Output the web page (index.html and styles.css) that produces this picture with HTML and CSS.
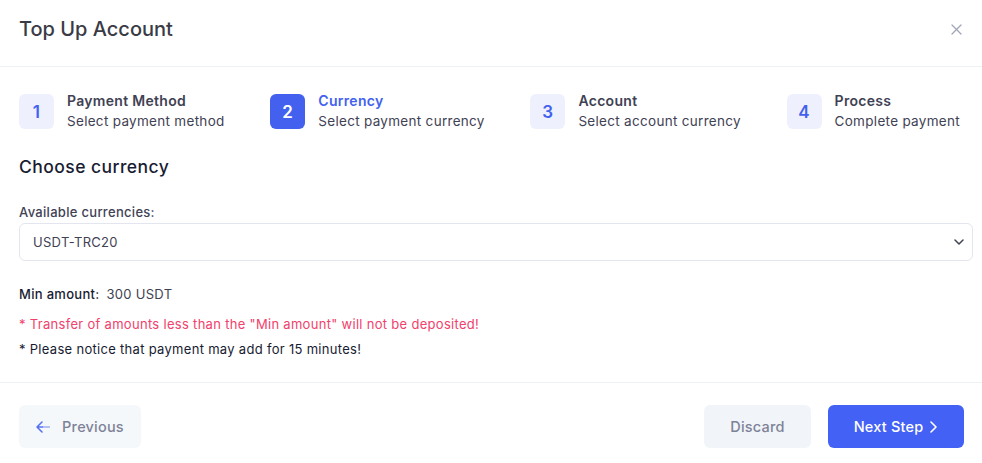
FILE: index.html
```html
<!DOCTYPE html>
<html>
<head>
<meta charset="utf-8">
<link rel="stylesheet" href="styles.css">
</head>
<body>
<div class="modal">
  <div class="modal-header">
    <h2 class="modal-title">Top Up Account</h2>
    <button class="close-btn" aria-label="Close">
      <svg width="11" height="11" viewBox="0 0 11 11"><path d="M1 1L10 10M10 1L1 10" stroke="#a1a5b7" stroke-width="1.3" stroke-linecap="round"/></svg>
    </button>
  </div>
  <div class="modal-body">
    <div class="stepper">
      <div class="step">
        <div class="step-icon">1</div>
        <div class="step-label">
          <div class="step-title">Payment Method</div>
          <div class="step-desc">Select payment method</div>
        </div>
      </div>
      <div class="step current">
        <div class="step-icon">2</div>
        <div class="step-label">
          <div class="step-title">Currency</div>
          <div class="step-desc">Select payment currency</div>
        </div>
      </div>
      <div class="step">
        <div class="step-icon">3</div>
        <div class="step-label">
          <div class="step-title">Account</div>
          <div class="step-desc">Select account currency</div>
        </div>
      </div>
      <div class="step">
        <div class="step-icon">4</div>
        <div class="step-label">
          <div class="step-title">Process</div>
          <div class="step-desc">Complete payment</div>
        </div>
      </div>
    </div>

    <h3 class="section-title">Choose currency</h3>

    <label class="field-label">Available currencies:</label>
    <div class="select">
      <span>USDT-TRC20</span>
      <svg class="chev" width="10" height="6" viewBox="0 0 10 6"><path d="M1 1L5 5L9 1" fill="none" stroke="#3f4254" stroke-width="1.5" stroke-linecap="round" stroke-linejoin="round"/></svg>
    </div>

    <div class="min-amount"><span class="min-label">Min amount:</span> 300 USDT</div>
    <div class="note danger">* Transfer of amounts less than the "Min amount" will not be deposited!</div>
    <div class="note">* Please notice that payment may add for 15 minutes!</div>
  </div>
  <div class="modal-footer">
    <button class="btn btn-light btn-prev">
      <svg width="14" height="12" viewBox="0 0 14 12"><path d="M6 1L1 6L6 11M1 6H13" fill="none" stroke="#4361ee" stroke-width="1.5" stroke-linecap="round" stroke-linejoin="round" opacity="0.9"/><path d="M7 6H13" stroke="#c7d0f8" stroke-width="1.5"/></svg>
      <span>Previous</span>
    </button>
    <div class="footer-right">
      <button class="btn btn-light btn-discard">Discard</button>
      <button class="btn btn-primary">Next Step
        <svg width="9" height="12" viewBox="0 0 9 12"><path d="M2 1L7 6L2 11" fill="none" stroke="#fff" stroke-width="1.6" stroke-linecap="round" stroke-linejoin="round"/></svg>
      </button>
    </div>
  </div>
</div>
</body>
</html>
```

FILE: styles.css
```css
* { box-sizing: border-box; }
html, body { margin: 0; padding: 0; background: #fff; }
body {
  font-family: Inter, "Noto Sans", sans-serif;
  color: #181c32;
  width: 982px;
  height: 463px;
  overflow: hidden;
  letter-spacing: 0.3px;
}
.modal { width: 982px; }
.modal-header {
  height: 67px;
  display: flex;
  align-items: center;
  justify-content: space-between;
  padding: 0 20px 0 19px;
  border-bottom: 1px solid #eff2f5;
}
.modal-title {
  margin: 0;
  font-family: Inter, Roboto, sans-serif;
  font-size: 20px;
  font-weight: 500;
  color: #3a3b45;
  letter-spacing: 0;
  padding-bottom: 8px;
}
.close-btn {
  border: 0;
  background: none;
  padding: 0;
  display: flex;
  margin-bottom: 8px;
}
.modal-body { padding: 25px 9px 0 19px; }
.stepper {
  display: flex;
  justify-content: space-between;
  padding-right: 13px;
}
.step { display: flex; align-items: center; gap: 13px; }
.step-icon {
  width: 35px;
  height: 35px;
  border-radius: 6px;
  background: #eef1fd;
  color: #4361ee;
  display: flex;
  align-items: center;
  justify-content: center;
  font-size: 17px;
  font-weight: 600;
}
.step.current .step-icon { background: #4361ee; color: #fff; }
.step-title {
  font-size: 14px;
  font-weight: 600;
  color: #3f4254;
  line-height: 18px;
}
.step.current .step-title { color: #4361ee; }
.step-desc {
  font-size: 13.5px;
  color: #3f4254;
  line-height: 20px;
  margin-top: 1px;
}
.section-title {
  margin: 24px 0 0;
  font-size: 17.5px;
  font-weight: 500;
  color: #181c32;
  line-height: 24px;
  letter-spacing: 0.45px;
}
.field-label {
  display: block;
  margin-top: 25px;
  font-size: 13px;
  font-weight: 500;
  color: #3f4254;
  line-height: 16px;
}
.select {
  margin-top: 3px;
  height: 38px;
  border: 1px solid #e4e6ef;
  border-radius: 6px;
  display: flex;
  align-items: center;
  justify-content: space-between;
  padding: 0 8px 0 13px;
  font-size: 13px;
  color: #3f4254;
}
.min-amount {
  margin-top: 25px;
  font-size: 13px;
  color: #3f4254;
  line-height: 16px;
}
.min-label { font-weight: 500; color: #181c32; margin-right: 3px; }
.note {
  font-size: 13px;
  color: #181c32;
  line-height: 16px;
  margin-top: 9px;
}
.note.danger { color: #f1416c; margin-top: 14px; }
.modal-footer {
  margin-top: 25px;
  border-top: 1px solid #eff2f5;
  padding: 22px 18px 0 19px;
  display: flex;
  justify-content: space-between;
}
.footer-right { display: flex; gap: 17px; }
.btn {
  height: 43px;
  border: 0;
  border-radius: 6px;
  font-family: inherit;
  font-size: 14.5px;
  font-weight: 500;
  letter-spacing: 0.2px;
  display: flex;
  align-items: center;
  justify-content: center;
  gap: 8px;
  cursor: pointer;
}
.btn-light { background: #f5f8fa; color: #7e8299; }
.btn-prev { width: 122px; gap: 12px; padding: 0; }
.btn-discard { width: 107px; background: #f1f4f8; }
.btn-primary { width: 136px; background: #4361f5; color: #fff; gap: 6px; }
```
